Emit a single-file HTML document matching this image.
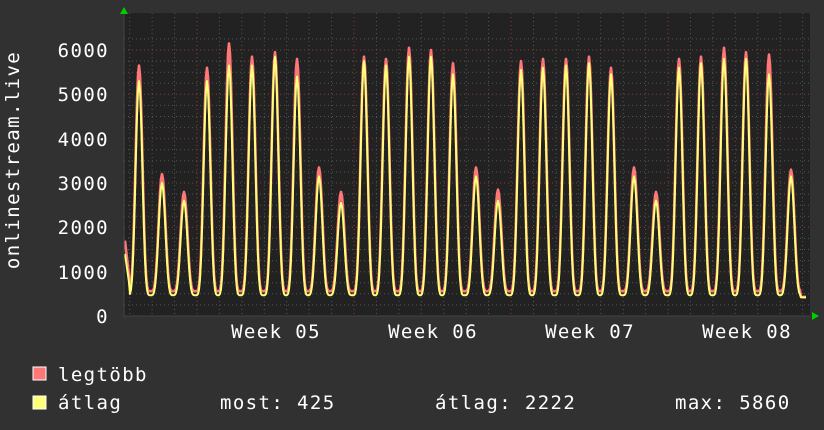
<!DOCTYPE html>
<html><head><meta charset="utf-8">
<style>
html,body{margin:0;padding:0;background:#313131;}
svg{display:block;}
text{font-family:"DejaVu Sans Mono","Liberation Mono",monospace;fill:#fff;font-size:19px;letter-spacing:1.4px;}
</style></head>
<body>
<svg id="g" width="824" height="430" xmlns="http://www.w3.org/2000/svg">
<rect width="824" height="430" fill="#313131"/>
<rect x="124" y="13" width="686" height="303" fill="#222"/>
<g id="grid"></g>
<polyline id="red" fill="none" stroke="#ff7878" stroke-width="2.6" stroke-linejoin="round"/>
<polyline id="yel" fill="none" stroke="#ffff78" stroke-width="2" stroke-linejoin="round"/>
<line x1="124" y1="10" x2="124" y2="318" stroke="#444" stroke-width="1"/>
<polygon points="120,14 128,14 124,7" fill="#00cc00"/>
<polygon points="812,312 812,320 819,316" fill="#00cc00"/>
<g text-anchor="end">
<text x="109" y="57">6000</text>
<text x="109" y="101">5000</text>
<text x="109" y="146">4000</text>
<text x="109" y="190">3000</text>
<text x="109" y="234">2000</text>
<text x="109" y="279">1000</text>
<text x="109" y="323">0</text>
</g>
<text transform="translate(19,160) rotate(-90)" text-anchor="middle">onlinestream.live</text>
<g text-anchor="middle">
<text x="276" y="338">Week 05</text>
<text x="433" y="338">Week 06</text>
<text x="590" y="338">Week 07</text>
<text x="747" y="338">Week 08</text>
</g>
<rect x="33" y="367" width="13" height="13" fill="#ff7878" stroke="#fff" stroke-width="1"/>
<rect x="33" y="396" width="13" height="13" fill="#ffff78" stroke="#fff" stroke-width="1"/>
<text x="58" y="381">legtöbb</text>
<text x="58" y="409">átlag</text>
<text x="220" y="409">most: 425</text>
<text x="435" y="409">átlag: 2222</text>
<text x="675" y="409">max: 5860</text>
</svg>
<script>
(function(){
var g=document.getElementById("grid"),h="";
function Y(v){return 316-v*0.04433;}
for(var v=250;v<6500;v+=250){var y=Y(v);if(y<13)break;
 var major=(v%1000===0);
 h+='<line x1="124" x2="810" y1="'+y.toFixed(1)+'" y2="'+y.toFixed(1)+'" stroke="'+(major?'#8a3a3a':'#555')+'" stroke-dasharray="1,3"/>';}
var d=22.43;
for(var i=-4;i<30;i++){var x=197+i*d;if(x<124||x>810)continue;
 var maj=((i%7)+7)%7===0;
 h+='<line x1="'+x.toFixed(1)+'" x2="'+x.toFixed(1)+'" y1="13" y2="316" stroke="'+(maj?'#8a3a3a':'#555')+'" stroke-dasharray="1,3"/>';}
h+='<line x1="124" x2="810" y1="316" y2="316" stroke="#444"/>';
g.innerHTML=h;
var P=[[139,5650,5300],[162,3200,3000],[184,2800,2600],[207,5600,5300],[229,6150,5650],[252,5850,5650],[275,5950,5850],[297,5800,5400],[319,3350,3150],[341,2800,2550],[364,5850,5750],[386,5800,5650],[409,6050,5850],[431,6000,5850],[453,5700,5450],[476,3350,3150],[498,2850,2600],[521,5750,5550],[543,5800,5600],[566,5800,5650],[589,5850,5700],[611,5600,5450],[634,3350,3150],[656,2800,2600],[679,5800,5600],[701,5850,5700],[724,6050,5800],[746,5950,5800],[769,5900,5450],[791,3300,3150]];
function val(x,k,base){var s=base;
 for(var i=0;i<P.length;i++){var dx=(x-P[i][0])/d;if(Math.abs(dx)>0.5)continue;
  var f=Math.pow((1+Math.cos(2*Math.PI*dx))/2,2.2);s=base+(P[i][k]-base)*f;}
 return s;}
var r="",yv="";
for(var x=125;x<=806;x+=1){
 var bR=560,bY=470;
 if(x>800){bR=430;bY=420;}
 var a=val(x,1,bR),b=val(x,2,bY);
 if(x<130){a=Math.max(a,1700-(x-125)*200);b=Math.max(b,1400-(x-125)*160);}
 r+=x+','+Y(a).toFixed(1)+' ';yv+=x+','+Y(b).toFixed(1)+' ';}
document.getElementById("red").setAttribute("points",r);
document.getElementById("yel").setAttribute("points",yv);
})();
</script>
</body></html>
